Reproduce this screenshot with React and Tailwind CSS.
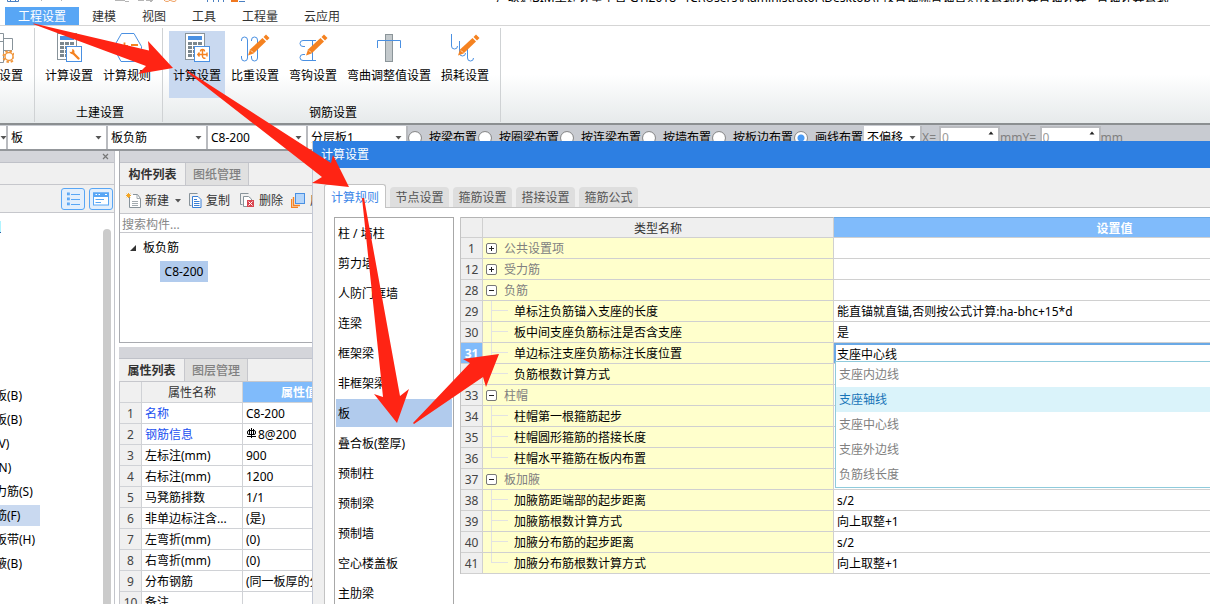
import React from "react";

const FONT = "font-['Noto_Sans','Noto_Sans_CJK_SC',sans-serif]";

/* ---------- ribbon icons ---------- */

function RibbonSvg({ children }) {
  return (
    <svg width="30" height="30" viewBox="0 0 30 30" fill="none" aria-hidden="true" className="block shrink-0">
      {children}
    </svg>
  );
}

function Pencil() {
  return (
    <g>
      <path d="M8 22.5L10 16.5L22.5 5L26 8.5L13.5 20.5Z" fill="#f58220" />
      <path d="M23.5 4L26 1.5L29.5 5L27 7.5Z" fill="#f58220" />
      <path d="M11 17.5L13 19.5" stroke="#fff" strokeWidth="0.8" />
    </g>
  );
}

function CalcBody({ children }) {
  return (
    <RibbonSvg>
      <rect x="3.5" y="0.5" width="19" height="26" fill="#fff" stroke="#88939a" />
      <rect x="6" y="3" width="14" height="4" fill="#4a90e2" />
      {[9, 13, 17, 21].map((y) =>
        [6, 11, 16].map((x) => <rect key={x + "-" + y} x={x} y={y} width="4" height="3" fill="#7b878e" />)
      )}
      <rect x="12.5" y="13.5" width="15" height="15" fill="#fff" stroke="#4a90e2" />
      {children}
    </RibbonSvg>
  );
}

function CalcWrenchIcon() {
  return (
    <CalcBody>
      <path d="M18.5 19.5L24.5 25.5" stroke="#f58220" strokeWidth="2.4" strokeLinecap="round" />
      <path d="M15.5 18.5a3 3 0 0 0 4 2.5a3 3 0 0 0 0-4.5l-1.3-.5v2.5l-1 .8z" fill="#f58220" />
    </CalcBody>
  );
}

function CalcRebarIcon() {
  return (
    <CalcBody>
      <path d="M20.5 17V23.5a2 2 0 0 0 3 1.5M16 21.5H25M17.5 19.5L15.8 21.5L17.5 23.5M18.5 18.5a2 2 0 0 1 4 0M25 19.5V23.5" stroke="#f58220" strokeWidth="1.4" />
    </CalcBody>
  );
}

function HexIcon() {
  return (
    <RibbonSvg>
      <path d="M9.5 0.5H22L29.5 13.5V15.5L22.5 28.5H9L2 15.5V13.5Z" fill="#fff" stroke="#4a90e2" />
      <path d="M9 13H16M12.5 9.5V17M19 12H26M9 20H16M19 18.5H26M19 21.5H26" stroke="#f58220" strokeWidth="1.8" />
    </RibbonSvg>
  );
}

function TreeGearIcon() {
  return (
    <RibbonSvg>
      <path d="M8.5 0.5H19.5V29.5H8.5M19.5 5.5H28.5V17M8.5 8.5H19M19.5 17.5H28" stroke="#88939a" />
      <circle cx="25" cy="23.5" r="5.5" stroke="#f0953a" strokeWidth="2" strokeDasharray="2.4 1.9" />
      <circle cx="25" cy="23.5" r="4" fill="#fff" stroke="#f0953a" strokeWidth="1.4" />
    </RibbonSvg>
  );
}

function WeightIcon() {
  return (
    <RibbonSvg>
      <path d="M1.5 8V7a3 3 0 0 1 6 0V25a3 3 0 0 1-6 0v-2M11.5 8V7a3 3 0 0 1 6 0V25a3 3 0 0 1-6 0v-2" stroke="#4a90e2" />
      <Pencil />
    </RibbonSvg>
  );
}

function HookIcon() {
  return (
    <RibbonSvg>
      <path d="M18 7.5H5a3 3 0 0 0 0 6h2M18 27.5H5a3 3 0 0 1 0-6h2M14.5 7.5V27.5" stroke="#4a90e2" />
      <Pencil />
    </RibbonSvg>
  );
}

function BendIcon() {
  return (
    <RibbonSvg>
      <rect x="11.5" y="1.5" width="7" height="27" fill="#c3c9cc" stroke="#8b9599" />
      <path d="M3.5 15V7.5H26.5V15" stroke="#4a90e2" />
    </RibbonSvg>
  );
}

function LossIcon() {
  return (
    <RibbonSvg>
      <path d="M1.5 1V13a3 3 0 0 0 6 0M9.5 8V20a3 3 0 0 0 6 0M17.5 16V25a3 3 0 0 0 6 0" stroke="#4a90e2" />
      <Pencil />
    </RibbonSvg>
  );
}

/* ---------- ribbon ---------- */

function RibbonButton({ icon, label, active }) {
  return (
    <button
      type="button"
      className={
        "flex h-[67px] flex-col items-center gap-[5px] px-1 pt-0.5 text-[12px] leading-4 whitespace-nowrap text-black " +
        (active ? "bg-[#c9d9f0]" : "")
      }
    >
      {icon}
      <span>{label}</span>
    </button>
  );
}

function RibbonGroup({ title, className = "", children }) {
  return (
    <section className={"flex flex-col justify-between border-r border-[#cfd2d4] pt-[3px] pr-[7px] pb-[1px] pl-1.5 " + className}>
      <div className="flex gap-0.5">{children}</div>
      <div className="h-4 pl-1 text-center text-[12px] leading-4 text-black">{title}</div>
    </section>
  );
}

function Ribbon() {
  return (
    <div className="flex h-[99px] shrink-0 overflow-hidden border-b-2 border-[#8b8f91] bg-gradient-to-b from-white from-50% to-[#e6eaeb] pt-0.5 pb-[1px]">
      <RibbonGroup title="" className="-ml-[35px]">
        <RibbonButton icon={<TreeGearIcon />} label="工程设置" />
      </RibbonGroup>
      <RibbonGroup title="土建设置">
        <RibbonButton icon={<CalcWrenchIcon />} label="计算设置" />
        <RibbonButton icon={<HexIcon />} label="计算规则" />
      </RibbonGroup>
      <RibbonGroup title="钢筋设置">
        <RibbonButton icon={<CalcRebarIcon />} label="计算设置" active />
        <RibbonButton icon={<WeightIcon />} label="比重设置" />
        <RibbonButton icon={<HookIcon />} label="弯钩设置" />
        <RibbonButton icon={<BendIcon />} label="弯曲调整值设置" />
        <RibbonButton icon={<LossIcon />} label="损耗设置" />
      </RibbonGroup>
    </div>
  );
}

function TitleStrip() {
  return (
    <div className="flex h-[7px] shrink-0 items-start gap-[246px] overflow-hidden bg-white">
      <svg width="250" height="4" viewBox="0 0 250 4" aria-hidden="true" className="shrink-0">
        <path d="M7.5 0V1.5H18.5V0M10.5 0V1M15.5 0V1M207.5 0V2M213.5 0V2M218.5 0V2M223.5 0V2M239 1.5H245" stroke="#4a7fc1" fill="none" />
        <path d="M41 0.5H42M61 0.5H62M115 0.5H125M125 1.5H129M138 0.5H144M146 0.5H153M150 1.5H152" stroke="#b5b5b5" />
        <path d="M164 0Q165 1.5 167 1.5T170 0Q172 1.5 174 1.5T176 0" stroke="#f0a060" fill="none" />
        <rect x="231" y="0" width="7" height="2" fill="#f07820" />
      </svg>
      <div className="flex h-0.5 shrink-0 items-end overflow-hidden text-[12px] leading-[9px] whitespace-pre text-black">
        <span>广联达BIM土建计量平台 GTJ2018 - [C:\Users\Administrator\Desktop\] 按直锚就直锚否则按公式计算直锚计算 - 直锚计算公式</span>
      </div>
    </div>
  );
}

function MenuTabs() {
  return (
    <nav className="flex h-[19px] shrink-0 border-b border-[#d5d5d5] bg-white pl-[5px] text-[12px] leading-4 text-[#333]">
      <button type="button" className="bg-[#58a6f5] px-[13px] pt-0.5 text-white">工程设置</button>
      {["建模", "视图", "工具", "工程量", "云应用"].map((t) => (
        <button key={t} type="button" className="px-[13px] pt-0.5">{t}</button>
      ))}
    </nav>
  );
}

/* ---------- option bar ---------- */

function Combo({ value, label, className = "w-[100px]" }) {
  return (
    <div className={"grid h-[23px] shrink-0 items-center border-r-2 border-[#b9bbbf] bg-white " + className}>
      <select aria-label={label} className="col-start-1 row-start-1 h-[22px] w-full appearance-none bg-transparent pl-[3px] text-[12px] text-black outline-none">
        <option>{value}</option>
      </select>
      <svg width="7" height="4" viewBox="0 0 7 4" aria-hidden="true" className="pointer-events-none col-start-1 row-start-1 mr-1 justify-self-end">
        <path d="M0.5 0H6.5L3.5 3.5Z" fill="#555" />
      </svg>
    </div>
  );
}

function LayoutRadio({ label, checked }) {
  return (
    <label className="flex shrink-0 items-center gap-[7px] pr-[1px] text-[12px] whitespace-nowrap">
      <input
        type="radio"
        name="layout"
        defaultChecked={checked}
        className="size-3.5 appearance-none rounded-full border border-[#8c8c8c] bg-white bg-clip-padding checked:bg-[radial-gradient(circle,#4a9bf5_3px,#fff_4px)]"
      />
      {label}
    </label>
  );
}

function OffsetInput({ label }) {
  return (
    <label className="flex shrink-0 items-center text-[12px] text-[#808080]">
      <span className="w-[17px]">{label}=</span>
      <span className="flex h-[23px] w-[61px] items-center border-2 border-[#b9bbbf] bg-white">
        <input defaultValue="0" className="w-full min-w-0 bg-transparent px-[1px] text-[12px] text-[#999] outline-none" />
        <svg width="6" height="4" viewBox="0 0 6 4" aria-hidden="true" className="mr-1 mb-2.5 shrink-0">
          <path d="M0.5 3.5H5.5L3 0.5Z" fill="#222" />
        </svg>
      </span>
      <span>mm</span>
    </label>
  );
}

function OptionBar() {
  return (
    <div className="flex h-[26px] shrink-0 items-start overflow-hidden border-b-2 border-[#94979b] bg-[#c8cbd1] pt-[1px] text-black">
      <Combo value="" label="楼层" className="w-2" />
      <Combo value="板" label="构件类型" />
      <Combo value="板负筋" label="构件" />
      <Combo value="C8-200" label="规格" />
      <Combo value="分层板1" label="分层" />
      <div className="flex h-[23px] shrink-0 items-center">
        <LayoutRadio label="按梁布置" />
        <LayoutRadio label="按圈梁布置" />
        <LayoutRadio label="按连梁布置" />
        <LayoutRadio label="按墙布置" />
        <LayoutRadio label="按板边布置" />
        <LayoutRadio label="画线布置" checked />
      </div>
      <Combo value="不偏移" label="偏移" className="w-[58px]" />
      <OffsetInput label="X" />
      <OffsetInput label="Y" />
    </div>
  );
}

/* ---------- left navigation ---------- */

const NAV = ["现浇板(B)", "螺旋板(B)", "柱帽(V)", "板洞(N)", "板受力筋(S)", "板负筋(F)", "楼层板带(H)", "板加腋(B)"];

function NavPanel() {
  return (
    <aside className="flex w-[115px] shrink-0 flex-col overflow-hidden border-r border-[#c3c5cb] bg-white">
      <div className="flex h-3 shrink-0 items-center justify-end border-b border-[#bfc1c8] bg-[#d4d5da] pr-[5px]">
        <button type="button" aria-label="关闭">
          <svg width="7" height="7" viewBox="0 0 7 7" aria-hidden="true">
            <path d="M1 1L6 6M6 1L1 6" stroke="#777" strokeWidth="1.2" />
          </svg>
        </button>
      </div>
      <div className="h-[22px] shrink-0 border-b border-[#c6c7cc] bg-[#f0f0f0]" />
      <div className="flex h-7 shrink-0 items-center justify-end gap-1 border-b border-[#c6c7cc] bg-[#f0f0f0] pr-[1px]">
        <button type="button" aria-label="列表视图" className="flex h-[22px] w-6 items-center justify-center rounded-[3px] border border-[#58a6f5] bg-[#e3effc]">
          <svg width="13" height="14" viewBox="0 0 13 14" fill="none" stroke="#58a6f5" aria-hidden="true">
            <path d="M4 2.5H13M4 7.5H13M4 12.5H13" />
            <rect x="0.5" y="1" width="1.8" height="1.8" />
            <rect x="0.5" y="6" width="1.8" height="1.8" />
            <rect x="0.5" y="11" width="1.8" height="1.8" />
          </svg>
        </button>
        <button type="button" aria-label="图标视图" className="flex h-[22px] w-6 items-center justify-center rounded-[3px] border border-[#58a6f5] bg-[#e3effc]">
          <svg width="16" height="14" viewBox="0 0 16 14" fill="none" aria-hidden="true">
            <rect x="0.5" y="1" width="15" height="12" fill="#fff" stroke="#58a6f5" />
            <rect x="0" y="0.5" width="16" height="4.5" fill="#58a6f5" />
            <path d="M2.5 7.5H11M2.5 10.5H8" stroke="#58a6f5" />
            <path d="M2.5 2.5H4M5.5 2.5H7M12 2.5H14" stroke="#fff" />
          </svg>
        </button>
      </div>
      <div className="flex min-h-0 grow justify-between">
        <div className="flex min-w-0 flex-col">
          <div className="mt-2 h-3 w-[1px] shrink-0 border-b border-[#2b5fa8] bg-[#b0f4ff]" />
          <ul className="-ml-[29px] mt-[152px] text-[12px] leading-[21px] whitespace-nowrap text-black">
            {NAV.map((n) => (
              <li key={n} className="h-6">
                <a href="#nav" className={"block h-[21px] w-[69px] " + (n === "板负筋(F)" ? "bg-[#c9d9f0]" : "")}>{n}</a>
              </li>
            ))}
          </ul>
        </div>
        <div className="mt-4 mr-[3px] w-2 shrink-0 rounded-t-full bg-[#cbcbcb]" />
      </div>
    </aside>
  );
}

/* ---------- middle column ---------- */

function PanelTabs({ active, other }) {
  return (
    <>
      <div className="h-3 shrink-0 border-b border-[#bfc1c8] bg-[#d4d5da]" />
      <div className="flex h-[23px] shrink-0 border-b border-[#c6c7cc] bg-[#f0f0f0] text-[12px] leading-5 whitespace-nowrap">
        <button type="button" className="w-[65px] pt-0.5 font-bold text-[#333]">{active}</button>
        <button type="button" className="w-16 border-x border-[#c6c7cc] bg-[#e0e0e0] pt-0.5 font-medium text-[#808080]">{other}</button>
      </div>
    </>
  );
}

function NewIcon() {
  return (
    <svg width="15" height="15" viewBox="0 0 15 15" fill="none" aria-hidden="true">
      <path d="M3.5 3.5V14.5H14.5V5.5L11.5 1.5H7" fill="#fff" stroke="#88939a" />
      <path d="M11 2V5.5H14M6 8.5H12M6 10.5H12M6 12.5H12" stroke="#a3abb0" />
      <path d="M2.5 0V5M0 2.5H5M0.7 0.7L4.3 4.3M4.3 0.7L0.7 4.3" stroke="#f5a623" />
    </svg>
  );
}

function CopyIcon() {
  return (
    <svg width="13" height="15" viewBox="0 0 13 15" fill="none" aria-hidden="true">
      <path d="M2.5 12.5H0.5V0.5H8.5" stroke="#88939a" />
      <path d="M3.5 3.5H9L12 6.5V14.5H3.5Z" fill="#fff" stroke="#3a7fd5" />
      <path d="M5 6.5H8M5 8.5H10.5M5 10.5H10.5M5 12.5H10.5" stroke="#3a7fd5" />
    </svg>
  );
}

function DeleteIcon() {
  return (
    <svg width="15" height="15" viewBox="0 0 15 15" fill="none" aria-hidden="true">
      <path d="M2.5 11.5H0.5V0.5H8.5" stroke="#88939a" />
      <path d="M7 13.5H3.5V3.5H8.5L11.5 6V7" fill="#fff" stroke="#88939a" />
      <rect x="7" y="7" width="7" height="7" fill="#d9444f" />
      <path d="M8.5 8.5L12.5 12.5M12.5 8.5L8.5 12.5" stroke="#fff" />
    </svg>
  );
}

function LayersIcon() {
  return (
    <svg width="15" height="15" viewBox="0 0 15 15" fill="none" aria-hidden="true">
      <rect x="4.5" y="0.5" width="9" height="10" fill="#b5d6fb" stroke="#4a90e2" />
      <path d="M2.5 4V12.5H9M0.5 6V14.5H7" stroke="#f58220" strokeWidth="1.4" />
    </svg>
  );
}

const PROPS = [
  ["名称", "C8-200", true],
  ["钢筋信息", "8@200", true],
  ["左标注(mm)", "900"],
  ["右标注(mm)", "1200"],
  ["马凳筋排数", "1/1"],
  ["非单边标注含...", "(是)"],
  ["左弯折(mm)", "(0)"],
  ["右弯折(mm)", "(0)"],
  ["分布钢筋", "(同一板厚的分布筋)"],
  ["备注", ""],
];

function RebarSymbol() {
  return (
    <svg width="12" height="11" viewBox="0 0 12 11" fill="none" stroke="#000" aria-hidden="true" className="inline-block align-[0px]">
      <rect x="1.5" y="2.5" width="8" height="4" rx="1.5" />
      <path d="M5.5 0V10M3.5 1V7M7.5 1V7M1 8.5H10" />
    </svg>
  );
}

function PropertyTable() {
  const cell = "h-[21px] border-r border-b border-[#d0d2d6] px-0 pt-0.5 pb-0";
  return (
    <table className="w-[237px] table-fixed border-separate border-spacing-0 self-start border-l border-[#c6c7cc] text-[12px] leading-[18px] whitespace-nowrap text-black">
      <colgroup>
        <col className="w-[22px]" />
        <col className="w-[101px]" />
        <col />
      </colgroup>
      <thead>
        <tr>
          <th className={cell + " bg-[#f0f0f0]"} />
          <th className={cell + " bg-[#f0f0f0] font-normal text-[#333]"}>属性名称</th>
          <th className={cell + " bg-[#80bbfb] font-bold text-white"}>属性值</th>
        </tr>
      </thead>
      <tbody>
        {PROPS.map(([name, value, blue], i) => (
          <tr key={name}>
            <th scope="row" className={cell + " bg-[#f0f0f0] font-normal text-[#444]"}>{i + 1}</th>
            <td className={cell + " overflow-hidden " + (blue ? "text-[#1a50f0]" : "")}>
              <div className="pl-[3px]">{name}</div>
            </td>
            <td className={cell + " overflow-hidden"}>
              <div className="h-[18px] pl-[3px]">
                {name === "钢筋信息" && <RebarSymbol />}
                {value}
              </div>
            </td>
          </tr>
        ))}
      </tbody>
    </table>
  );
}

function MiddleColumn() {
  return (
    <div className="ml-1 flex w-[238px] shrink-0 flex-col overflow-hidden bg-white">
      <section className="flex h-48 shrink-0 flex-col border-b border-l border-[#a9abb0]">
        <PanelTabs active="构件列表" other="图纸管理" />
        <div className="flex h-7 shrink-0 items-center border-b border-[#c6c7cc] bg-[#f0f0f0] pt-0.5 pl-1.5 text-[12px] whitespace-nowrap text-[#333]">
          <button type="button" className="flex items-center gap-1">
            <NewIcon />
            新建
            <svg width="6" height="4" viewBox="0 0 6 4" aria-hidden="true" className="ml-0.5">
              <path d="M0 0H6L3 3.5Z" fill="#555" />
            </svg>
          </button>
          <button type="button" className="ml-2 flex items-center gap-1"><CopyIcon />复制</button>
          <button type="button" className="ml-2.5 flex items-center gap-1"><DeleteIcon />删除</button>
          <button type="button" className="ml-2 flex items-center gap-1"><LayersIcon />层间复制</button>
        </div>
        <input
          aria-label="搜索构件"
          placeholder="搜索构件..."
          className="h-[19px] shrink-0 border-b border-[#c6c7cc] bg-white pt-0.5 pl-0.5 text-[12px] outline-none placeholder:text-[#888]"
        />
        <div className="pt-[5px] text-[12px] leading-5 text-black">
          <div className="flex items-center gap-[7px] pl-2.5">
            <svg width="6" height="6" viewBox="0 0 6 6" aria-hidden="true"><path d="M6 0V6H0Z" fill="#333" /></svg>
            板负筋
          </div>
          <div className="mt-[3px] ml-10 w-12 bg-[#b1cbed] text-center leading-[21px]">C8-200</div>
        </div>
      </section>
      <section className="mt-1 flex min-h-0 grow flex-col overflow-hidden">
        <PanelTabs active="属性列表" other="图层管理" />
        <PropertyTable />
      </section>
    </div>
  );
}

/* ---------- dialog ---------- */

const TYPES = ["柱 / 墙柱", "剪力墙", "人防门框墙", "连梁", "框架梁", "非框架梁", "板", "叠合板(整厚)", "预制柱", "预制梁", "预制墙", "空心楼盖板", "主肋梁"];

const ROWS = [
  { n: 1, name: "公共设置项", group: "+" },
  { n: 12, name: "受力筋", group: "+" },
  { n: 28, name: "负筋", group: "-" },
  { n: 29, name: "单标注负筋锚入支座的长度", value: "能直锚就直锚,否则按公式计算:ha-bhc+15*d" },
  { n: 30, name: "板中间支座负筋标注是否含支座", value: "是" },
  { n: 31, name: "单边标注支座负筋标注长度位置", value: "支座中心线", active: true },
  { n: 32, name: "负筋根数计算方式", value: "", last: true },
  { n: 33, name: "柱帽", group: "-" },
  { n: 34, name: "柱帽第一根箍筋起步", value: "" },
  { n: 35, name: "柱帽圆形箍筋的搭接长度", value: "" },
  { n: 36, name: "柱帽水平箍筋在板内布置", value: "", last: true },
  { n: 37, name: "板加腋", group: "-" },
  { n: 38, name: "加腋筋距端部的起步距离", value: "s/2" },
  { n: 39, name: "加腋筋根数计算方式", value: "向上取整+1" },
  { n: 40, name: "加腋分布筋的起步距离", value: "s/2" },
  { n: 41, name: "加腋分布筋根数计算方式", value: "向上取整+1", last: true },
];

const OPTIONS = ["支座内边线", "支座轴线", "支座中心线", "支座外边线", "负筋线长度"];

function NameCell({ row }) {
  if (row.group) {
    return (
      <div className="flex h-5 items-center gap-[7px] pl-[3px] leading-[18px] text-[#808080]">
        <button type="button" aria-label={row.group === "+" ? "展开" : "折叠"}>
          <svg width="11" height="11" viewBox="0 0 11 11" fill="none" aria-hidden="true" className="block">
            <rect x="0.5" y="0.5" width="10" height="10" rx="1.5" fill="#fff" stroke="#777" />
            <path d={row.group === "+" ? "M3 5.5H8M5.5 3V8" : "M3 5.5H8"} stroke="#222" />
          </svg>
        </button>
        <span className="pt-0.5">{row.name}</span>
      </div>
    );
  }
  return (
    <div className="flex h-5 items-center pl-2 leading-[18px]">
      <span className="mr-1.5 flex w-[17px] flex-col">
        <span className="h-2.5 border-b border-l border-[#e2e2e2]" />
        <span className={"h-2.5 " + (row.last ? "" : "border-l border-[#e2e2e2]")} />
      </span>
      <span className="pt-0.5">{row.name}</span>
    </div>
  );
}

function SettingEditor({ value }) {
  return (
    <div className="relative h-5">
      <input
        role="combobox"
        aria-expanded="true"
        aria-controls="options"
        aria-label="单边标注支座负筋标注长度位置"
        defaultValue={value}
        className="block h-full w-full border-t-2 border-l-2 border-[#6aa9e6] bg-white pl-[1px] text-[12px] text-black outline-none"
      />
      <ul id="options" role="listbox" className="absolute top-[18px] right-0 left-[1px] z-10 border border-[#8fcbdc] bg-white text-[#808080]">
        {OPTIONS.map((o) => (
          <li
            key={o}
            role="option"
            aria-selected={o === "支座轴线"}
            className={"h-[25px] pl-[3px] leading-[25px] " + (o === "支座轴线" ? "bg-[#daf3fa] text-[#1874b8]" : "")}
          >
            {o}
          </li>
        ))}
      </ul>
    </div>
  );
}

function SettingsTable() {
  const cell = "h-[21px] border-b border-r border-[#d0d0d0] ";
  const head = cell + "border-t px-0 pt-0.5 pb-0 leading-[17px] ";
  return (
    <table className="w-[936px] shrink-0 table-fixed border-separate border-spacing-0 self-start border-l border-[#c3c3c3] text-[12px] leading-5 whitespace-nowrap text-black">
      <colgroup>
        <col className="w-[22px]" />
        <col className="w-[351px]" />
        <col />
      </colgroup>
      <thead>
        <tr>
          <th className={head + "border-t-[#b5b5b5] bg-[#efefef]"} />
          <th className={head + "border-t-[#b5b5b5] bg-[#efefef] font-normal text-[#333]"}>类型名称</th>
          <th className={head + "border-t-[#6aa9e6] bg-[#80bbfb] font-bold text-white"}>设置值</th>
        </tr>
      </thead>
      <tbody>
        {ROWS.map((r) => (
          <tr key={r.n}>
            <th
              scope="row"
              className={cell + "px-0 pt-0.5 pb-0 leading-[18px] " + (r.active ? "bg-[#80bbfb] font-bold text-white" : "bg-[#efefef] font-normal text-[#444]")}
            >
              {r.n}
            </th>
            <td className={cell + "bg-[#ffffcc] p-0"}><NameCell row={r} /></td>
            {r.active ? (
              <td className={cell + "p-0"}><SettingEditor value={r.value} /></td>
            ) : (
              <td className={cell + "pt-0.5 pr-0 pb-0 pl-[3px] leading-[18px]"}>{r.value}</td>
            )}
          </tr>
        ))}
      </tbody>
    </table>
  );
}

function Dialog() {
  return (
    <div role="dialog" aria-label="计算设置" className="absolute top-[141px] right-0 bottom-0 left-[312px] flex flex-col overflow-hidden border-l border-[#c3c8d4] bg-[#efefef]">
      <h2 className="-ml-[1px] h-[27px] shrink-0 bg-[#2d7fe2] pl-[9px] text-[12px] leading-[27px] text-white">计算设置</h2>
      <div role="tablist" className="mt-4 flex shrink-0 items-end gap-1 pl-[11px] text-[12px]">
        <button type="button" role="tab" aria-selected="true" className="z-10 -mb-[1px] h-6 w-[62px] rounded-t-[3px] border border-b-0 border-[#c3c3c3] bg-white pt-0.5 text-[#3a86e8]">计算规则</button>
        {["节点设置", "箍筋设置", "搭接设置", "箍筋公式"].map((t) => (
          <button key={t} type="button" role="tab" aria-selected="false" className="h-5 w-[59px] rounded-t-[4px] bg-[#dedede] pt-0.5 text-[#555]">{t}</button>
        ))}
      </div>
      <div className="ml-[11px] flex min-h-0 grow gap-1.5 overflow-hidden border-t border-l border-[#c3c3c3] bg-white pt-[9px] pl-[9px]">
        <ul className="-mb-8 flex w-[120px] shrink-0 flex-col gap-0.5 border border-[#a8a8a8] px-[1px] pt-[1px] text-[12px] leading-[26px] text-black">
          {TYPES.map((t) => (
            <li key={t}>
              <a href="#type" className={"block pt-0.5 pl-0.5 " + (t === "板" ? "bg-[#b1cbed]" : "")}>{t}</a>
            </li>
          ))}
        </ul>
        <SettingsTable />
      </div>
    </div>
  );
}

/* ---------- guide arrows drawn over the windows ---------- */

function GuideArrows() {
  return (
    <svg width="520" height="440" viewBox="0 0 520 440" aria-hidden="true" className="pointer-events-none absolute top-0 left-0 z-20" fill="#ff2414">
      <polygon points="33,24 34,23.5 149,50.5 148,41 173,68 138,74 146,66" />
      <polygon points="187,72 188,71 331,163 333,155 349,187 312,183 322,177" />
      <polygon points="362,198 364,198 400,396 409,389 397,423 374,394 383,397" />
      <polygon points="413,423 470,363 463,359 499,354 486,387 483,377 414,424" />
    </svg>
  );
}

export default function App() {
  return (
    <div className={"relative flex h-screen flex-col overflow-hidden bg-white " + FONT}>
      <TitleStrip />
      <MenuTabs />
      <Ribbon />
      <OptionBar />
      <div className="flex min-h-0 grow">
        <NavPanel />
        <MiddleColumn />
      </div>
      <Dialog />
      <GuideArrows />
    </div>
  );
}
